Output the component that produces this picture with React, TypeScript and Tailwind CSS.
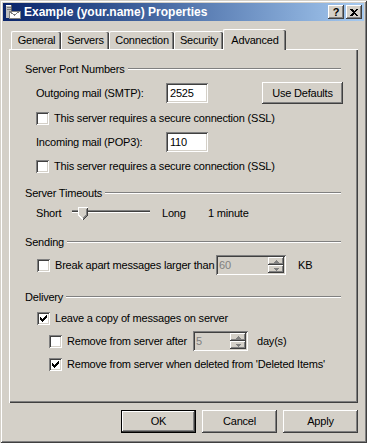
import React from 'react';

const raised =
  'shadow-[inset_-1px_-1px_#404040,inset_1px_1px_#ffffff,inset_-2px_-2px_#808080,inset_2px_2px_#d4d0c8]';
const sunken =
  'shadow-[inset_1px_1px_#808080,inset_-1px_-1px_#ffffff,inset_2px_2px_#404040,inset_-2px_-2px_#d4d0c8]';

const CHECK_PIXELS: [number, number][] = [
  [6, 0], [5, 1], [6, 1], [0, 2], [4, 2], [5, 2], [6, 2],
  [0, 3], [1, 3], [3, 3], [4, 3], [5, 3],
  [0, 4], [1, 4], [2, 4], [3, 4], [4, 4],
  [1, 5], [2, 5], [3, 5], [2, 6],
];

function CheckBox({ checked = false }: { checked?: boolean }) {
  return (
    <span className={`flex size-[13px] shrink-0 items-center justify-center bg-white ${sunken}`}>
      {checked && (
        <svg width="7" height="7" viewBox="0 0 7 7" shapeRendering="crispEdges">
          {CHECK_PIXELS.map(([x, y]) => (
            <rect key={`${x}-${y}`} x={x} y={y} width="1" height="1" fill="#000" />
          ))}
        </svg>
      )}
    </span>
  );
}

function GroupHeader({ title, className = '' }: { title: string; className?: string }) {
  return (
    <div className={`flex h-4 items-center gap-[3px] ${className}`}>
      <span>{title}</span>
      <div className="h-[2px] flex-1 border-t border-b border-t-[#808080] border-b-white" />
    </div>
  );
}

function SpinArrow({ up }: { up?: boolean }) {
  return (
    <div className={`flex h-[8px] items-center justify-center bg-[#d4d0c8] ${raised}`}>
      <svg width="5" height="3" viewBox="0 0 5 3" shapeRendering="crispEdges">
        {up ? (
          <path d="M2 0h1v1h1v1h1v1H0V2h1V1h1z" fill="#808080" />
        ) : (
          <path d="M0 0h5v1H4v1H3v1H2V2H1V1H0z" fill="#808080" />
        )}
      </svg>
    </div>
  );
}

function Spinner({ value, width }: { value: string; width: string }) {
  return (
    <div className={`flex h-[20px] shrink-0 p-[2px] bg-[#d4d0c8] ${sunken} ${width}`}>
      <span className="flex-1 pl-[1px] leading-[16px] text-[#808080]">{value}</span>
      <div className="flex w-[16px] flex-col">
        <SpinArrow up />
        <SpinArrow />
      </div>
    </div>
  );
}

function TextBox({ value }: { value: string }) {
  return (
    <div className={`h-[20px] w-[42px] shrink-0 bg-white px-[4px] leading-[20px] ${sunken}`}>{value}</div>
  );
}

function Button({ label, isDefault = false }: { label: string; isDefault?: boolean }) {
  if (isDefault) {
    return (
      <div className="h-[23px] w-[75px] border border-black">
        <div className={`flex h-full items-center justify-center ${raised}`}>{label}</div>
      </div>
    );
  }
  return (
    <div className={`flex h-[23px] w-[75px] items-center justify-center ${raised}`}>{label}</div>
  );
}

function TitleIcon() {
  return (
    <svg width="16" height="16" viewBox="0 0 16 16" shapeRendering="crispEdges">
      <rect x="1" y="1" width="6" height="13" fill="#c0c0c0" />
      <rect x="1" y="1" width="6" height="1" fill="#ffffff" />
      <rect x="6" y="1" width="1" height="13" fill="#606060" />
      <rect x="2" y="3" width="4" height="1" fill="#808080" />
      <rect x="2" y="5" width="4" height="1" fill="#808080" />
      <rect x="4" y="7" width="11" height="7" fill="#ffffff" />
      <path d="M4 7h11v7H4z" fill="none" stroke="#808080" strokeWidth="1" />
      <path d="M4.5 7.5l5 3.5 5-3.5" fill="none" stroke="#808080" strokeWidth="1" />
    </svg>
  );
}

function Thumb() {
  return (
    <svg width="11" height="13" viewBox="0 0 11 13" shapeRendering="crispEdges">
      <path d="M0 0h10v8l-5 5-5-5z" fill="#d4d0c8" />
      <path d="M0.5 8V0.5h9" fill="none" stroke="#ffffff" />
      <path d="M9.5 0.5v8l-4.5 4.5" fill="none" stroke="#404040" />
      <path d="M8.5 1.5v6.5l-3.5 3.5" fill="none" stroke="#808080" />
      <path d="M0.5 8l4.5 4.5" fill="none" stroke="#ffffff" />
    </svg>
  );
}

export default function App() {
  const tabs = [
    { label: 'General', w: 'w-[50px]' },
    { label: 'Servers', w: 'w-[48px]' },
    { label: 'Connection', w: 'w-[65px]' },
    { label: 'Security', w: 'w-[49px]' },
  ];

  return (
    <div className="h-[443px] w-[367px] whitespace-nowrap bg-[#d4d0c8] font-['Liberation_Sans',Arial,sans-serif] text-[11px] tracking-[-0.2px] text-black">
      <div className="flex h-full flex-col p-[3px] shadow-[inset_1px_1px_#d4d0c8,inset_-1px_-1px_#404040,inset_2px_2px_#ffffff,inset_-2px_-2px_#808080]">
        {/* title bar */}
        <div className="flex h-[18px] items-center bg-linear-to-r from-[#0a246a] to-[#a6caf0] pl-[2px] pr-[2px]">
          <TitleIcon />
          <span className="ml-[3px] text-[12px] font-bold tracking-normal text-white">Example (your.name) Properties</span>
          <div className="ml-auto flex gap-[2px]">
            <div className={`flex h-[14px] w-[16px] items-center justify-center bg-[#d4d0c8] ${raised}`}>
              <span className="text-[11px] font-bold leading-none">?</span>
            </div>
            <div className={`flex h-[14px] w-[16px] items-center justify-center bg-[#d4d0c8] ${raised}`}>
              <svg width="8" height="7" viewBox="0 0 8 7" shapeRendering="crispEdges">
                <path d="M0 0h2l2 2 2-2h2L5 3.5 8 7H6L4 5 2 7H0l3-3.5z" fill="#000" />
              </svg>
            </div>
          </div>
        </div>

        <div className="flex flex-1 flex-col px-[6px] pt-[8px]">
          {/* tabs */}
          <div className="flex h-[20px] items-end pl-[2px]">
            {tabs.map((t) => (
              <div
                key={t.label}
                className={`flex h-[18px] items-center justify-center rounded-t-[2px] border-t border-l border-white shadow-[inset_-1px_0_#404040,inset_-2px_0_#808080] ${t.w}`}
              >
                {t.label}
              </div>
            ))}
            <div className="relative z-10 -mb-px flex h-[21px] w-[63px] items-start justify-center rounded-t-[2px] border-t border-l border-white bg-[#d4d0c8] pt-[2px] shadow-[inset_-1px_0_#404040,inset_-2px_0_#808080]">
              Advanced
            </div>
          </div>

          {/* panel */}
          <div className="flex h-[354px] w-[349px] flex-col pl-[16px] pr-[17px] shadow-[inset_1px_1px_#ffffff,inset_-1px_-1px_#404040,inset_-2px_-2px_#808080]">
            <GroupHeader title="Server Port Numbers" className="mt-[12px]" />
            <div className="flex h-[32px] items-center pl-[11px]">
              <span className="w-[130px]">Outgoing mail (SMTP):</span>
              <TextBox value="2525" />
              <div className={`-mr-[2px] ml-auto flex h-[22px] w-[81px] items-center justify-center ${raised}`}>
                Use Defaults
              </div>
            </div>
            <div className="flex h-[18px] items-center gap-[5px] pl-[11px]">
              <CheckBox />
              <span>This server requires a secure connection (SSL)</span>
            </div>
            <div className="flex h-[30px] items-center pl-[11px]">
              <span className="w-[130px]">Incoming mail (POP3):</span>
              <TextBox value="110" />
            </div>
            <div className="flex h-[18px] items-center gap-[5px] pl-[11px]">
              <CheckBox />
              <span>This server requires a secure connection (SSL)</span>
            </div>

            <GroupHeader title="Server Timeouts" className="mt-[10px]" />
            <div className="flex h-[24px] items-center pl-[11px]">
              <span className="w-[36px]">Short</span>
              <div className="flex w-[90px] flex-col">
                <div className="relative h-[13px] w-[78px]">
                  <div className="absolute top-[3px] left-0 h-[3px] w-[78px] border-t border-b border-t-[#808080] border-b-white bg-[#404040]" />
                  <div className="absolute top-0 left-[6px]">
                    <Thumb />
                  </div>
                </div>
              </div>
              <span className="w-[46px]">Long</span>
              <span>1 minute</span>
            </div>

            <GroupHeader title="Sending" className="mt-[9px]" />
            <div className="flex h-[30px] items-center pl-[12px]">
              <CheckBox />
              <span className="ml-[5px] w-[161px] shrink-0">Break apart messages larger than</span>
              <Spinner value="60" width="w-[70px]" />
              <span className="ml-[12px]">KB</span>
            </div>

            <GroupHeader title="Delivery" className="mt-[9px]" />
            <div className="flex h-[26px] items-center gap-[5px] pl-[12px]">
              <CheckBox checked />
              <span>Leave a copy of messages on server</span>
            </div>
            <div className="flex h-[20px] items-center pl-[24px]">
              <CheckBox />
              <span className="ml-[5px] w-[126px] shrink-0">Remove from server after</span>
              <Spinner value="5" width="w-[55px]" />
              <span className="ml-[9px]">day(s)</span>
            </div>
            <div className="flex h-[26px] items-center gap-[5px] pl-[24px]">
              <CheckBox checked />
              <span>Remove from server when deleted from 'Deleted Items'</span>
            </div>
          </div>

          {/* dialog buttons */}
          <div className="mt-[7px] flex w-[349px] justify-end gap-[6px]">
            <Button label="OK" isDefault />
            <Button label="Cancel" />
            <Button label="Apply" />
          </div>
        </div>
      </div>
    </div>
  );
}
